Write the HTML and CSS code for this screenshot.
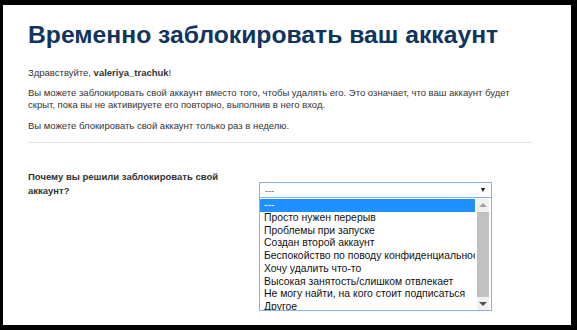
FILE: index.html
```html
<!DOCTYPE html>
<html lang="ru">
<head>
  <meta charset="UTF-8">
  <meta name="viewport" content="width=device-width, initial-scale=1.0">
  <title>Временно заблокировать ваш аккаунт</title>
<link rel="stylesheet" href="styles.css">
</head>
<body>
  <div class="page">
    <h1 class="page-title">Временно заблокировать ваш аккаунт</h1>

    <p class="greeting">Здравствуйте, <b>valeriya_trachuk</b>!</p>
    <p>Вы можете заблокировать свой аккаунт вместо того, чтобы удалять его. Это означает, что ваш аккаунт будет скрыт, пока вы не активируете его повторно, выполнив в него вход.</p>
    <p>Вы можете блокировать свой аккаунт только раз в неделю.</p>

    <hr class="divider">

    <div class="reason-row">
      <label class="reason-label" for="reason">Почему вы решили заблокировать свой аккаунт?</label>

      <div class="custom-select">
        <div class="select-selected" id="reason">---</div>
        <!-- open option list -->
        <div class="select-items">
          <div class="select-options">
            <div class="same-as-selected">---</div>
            <div>Просто нужен перерыв</div>
            <div>Проблемы при запуске</div>
            <div>Создан второй аккаунт</div>
            <div>Беспокойство по поводу конфиденциальности</div>
            <div>Хочу удалить что-то</div>
            <div>Высокая занятость/слишком отвлекает</div>
            <div>Не могу найти, на кого стоит подписаться</div>
            <div>Другое</div>
          </div>
          <div class="scrollbar">
            <span class="scroll-up"></span>
            <span class="scroll-thumb"></span>
            <span class="scroll-down"></span>
          </div>
        </div>
      </div>
    </div>
  </div>
</body>
</html>
```

FILE: styles.css
```css
body {
  margin: 0;
  background-color: #000;
  font-family: "Liberation Sans", Arial, sans-serif;
  color: #333;
}

.page {
  background-color: #fff;
  margin: 5px 6px 5px 3px;
  height: 320px;
  padding: 16px 39px 0 25px;
  box-sizing: border-box;
}

.page-title {
  margin: 0 0 18px;
  font-size: 24.7px;
  line-height: 28px;
  color: #10355e;
}

.page p {
  margin: 0 0 8px;
  font-size: 9.5px;
  line-height: 12.5px;
}

.page .greeting {
  margin-bottom: 7px;
}

.divider {
  border: none;
  border-top: 1px solid #e2e2e2;
  margin: 10px 0 0;
}

/* label on the left, select on the right */
.reason-row {
  display: flex;
  margin-top: 27px;
}

.reason-label {
  width: 231px;
  padding-right: 30px;
  box-sizing: border-box;
  font-size: 9.5px;
  line-height: 14px;
  font-weight: bold;
}

/* The container must be positioned relative: */
.custom-select {
  position: relative;
  width: 233px;
  margin-top: 12px;
}

.select-selected {
  height: 16px;
  box-sizing: border-box;
  border: 1px solid #8ab0ea;
  padding: 3px 5px 0;
  font-size: 9px;
  line-height: 10px;
  color: #555;
  position: relative;
}

/* small arrow on the right */
.select-selected:after {
  position: absolute;
  content: "";
  top: 5px;
  right: 6px;
  border: 2.5px solid transparent;
  border-top: 4px solid #111;
}

.select-items {
  position: absolute;
  top: 16px;
  left: 0;
  right: 0;
  height: 113px;
  box-sizing: border-box;
  background-color: #fff;
  border: 1px solid #8ab0ea;
  border-top: none;
  display: flex;
  overflow: hidden;
  z-index: 99;
}

.select-options {
  flex: 1;
  padding-top: 1px;
  overflow: hidden;
}

.select-options div {
  height: 12.75px;
  line-height: 12.75px;
  padding-left: 4px;
  font-size: 10.4px;
  color: #111;
  white-space: nowrap;
  overflow: hidden;
}

.select-options .same-as-selected {
  background-color: #1e90ff;
  color: #fff;
}

.scrollbar {
  width: 12px;
  margin: 1px 2px 0 2px;
  background-color: #f1f1f1;
  display: flex;
  flex-direction: column;
  align-items: center;
}

.scroll-up,
.scroll-down {
  width: 0;
  height: 0;
  border: 4px solid transparent;
}

.scroll-up {
  border-top: none;
  border-bottom: 4px solid #a3a3a3;
  margin: 4px 0 5px;
}

.scroll-down {
  border-bottom: none;
  border-top: 4px solid #505050;
  margin: 5px 0 4px;
}

.scroll-thumb {
  flex: 1;
  width: 100%;
  background-color: #c1c1c1;
}
```
